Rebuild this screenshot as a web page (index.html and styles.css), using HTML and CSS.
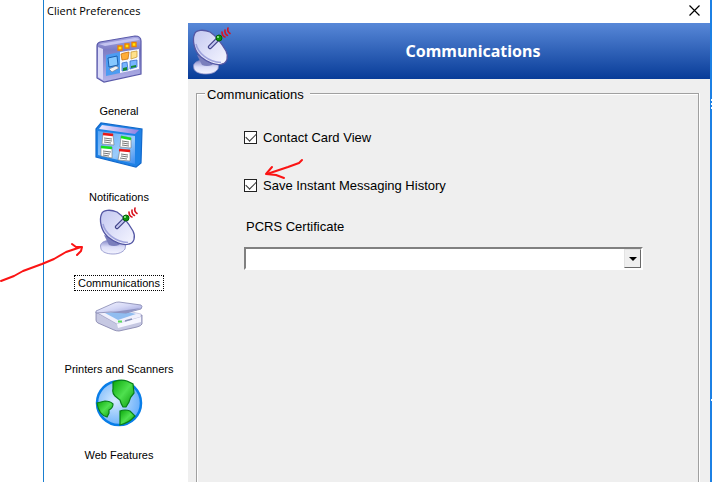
FILE: index.html
```html
<!DOCTYPE html>
<html lang="en">
<head>
  <meta charset="UTF-8">
  <meta name="viewport" content="width=device-width, initial-scale=1.0">
  <title>Client Preferences</title>
  <link rel="stylesheet" href="styles.css">
</head>
<body>
  <!-- shared gradients and the dish symbol -->
  <svg class="defs" width="0" height="0" aria-hidden="true">
    <defs>
      <linearGradient id="lilac" x1="0" y1="0" x2="1" y2="1">
        <stop offset="0" stop-color="#f6f6ff"/>
        <stop offset="0.5" stop-color="#d5d8f6"/>
        <stop offset="1" stop-color="#979bd8"/>
      </linearGradient>
      <linearGradient id="bowl" x1="0" y1="0" x2="1" y2="1">
        <stop offset="0" stop-color="#c3c7f0"/>
        <stop offset="0.6" stop-color="#e2e4fa"/>
        <stop offset="1" stop-color="#f6f6ff"/>
      </linearGradient>
      <linearGradient id="base" x1="0" y1="0" x2="0" y2="1">
        <stop offset="0" stop-color="#8286c6"/>
        <stop offset="0.5" stop-color="#dcdef8"/>
        <stop offset="1" stop-color="#f4f4ff"/>
      </linearGradient>
      <linearGradient id="frame" x1="0" y1="0" x2="0" y2="1">
        <stop offset="0" stop-color="#a9a9e4"/>
        <stop offset="0.3" stop-color="#7c7cc4"/>
        <stop offset="1" stop-color="#b4b4ea"/>
      </linearGradient>
      <linearGradient id="sky" x1="0" y1="0" x2="1" y2="1">
        <stop offset="0" stop-color="#5aa5f5"/>
        <stop offset="0.6" stop-color="#9cccfb"/>
        <stop offset="1" stop-color="#3c8cf0"/>
      </linearGradient>
      <linearGradient id="purple" x1="0" y1="0" x2="1" y2="0">
        <stop offset="0" stop-color="#eeeaff"/>
        <stop offset="1" stop-color="#8f7fe0"/>
      </linearGradient>
      <linearGradient id="land" x1="0" y1="0" x2="1" y2="1">
        <stop offset="0" stop-color="#0aa80a"/>
        <stop offset="0.5" stop-color="#4fe04f"/>
        <stop offset="1" stop-color="#089a08"/>
      </linearGradient>
      <radialGradient id="sea" cx="0.4" cy="0.45" r="0.6">
        <stop offset="0" stop-color="#d4eaff"/>
        <stop offset="1" stop-color="#69affa"/>
      </radialGradient>
      <symbol id="dish" viewBox="0 0 48 48">
        <path d="M5.500 39 C5.500 35 11 33 18 33 C25 33 30.500 35 30.500 39 L30 42 C28 45 24 47 18 47 C12 47 7 45 6 42Z" fill="url(#base)" stroke="#8a8ec8" stroke-width="0.800"/>
        <path d="M9 28 L14 38 Q19 40 24 38 L27 34Z" fill="#7a7ebc"/>
        <path d="M6.500 7 C8 3 15 2 22 5 C28 9 34 17 38 24 C41 30 39 36 34 37 C28 39 19 35 13 30 C6 24 4 13 6.500 7Z" fill="url(#bowl)" stroke="#5457a4" stroke-width="1.300"/>
        <path d="M8 17 C10 26 20 35 33 35.500" fill="none" stroke="#9ea2dc" stroke-width="1.500"/>
        <path d="M22 20 L30 12" stroke="#3f4288" stroke-width="4.500" stroke-linecap="round"/>
        <path d="M22 20 L29 13" stroke="#c4c7f0" stroke-width="2" stroke-linecap="round"/>
        <circle cx="31" cy="11" r="3" fill="#0c920c" stroke="#056005"/>
        <circle cx="30" cy="10" r="1" fill="#9df59d"/>
        <path d="M34 5 Q34 9 37 10 M37 3 Q36.500 7 39.500 8.500 M40 1 Q39 4.500 42 6.500" fill="none" stroke="#d81420" stroke-width="1.600" stroke-linecap="round"/>
      </symbol>
    </defs>
  </svg>

  <div class="window">
    <header class="titlebar">
      <span class="titlebar-text">Client Preferences</span>
      <button class="close" type="button" aria-label="Close">
        <svg width="11" height="11" viewBox="0 0 11 11"><path d="M0.500 0.500 L10.500 10.500 M10.500 0.500 L0.500 10.500" stroke="#000" stroke-width="1.200"/></svg>
      </button>
    </header>

    <div class="content">
      <nav class="sidebar">
        <button class="nav-item" type="button">
          <svg class="icon" viewBox="0 0 48 48">
            <path d="M2 11 Q2 8 5 7 L40 1 Q46 1 46 6 L46 39 L9 47 L2 43Z" fill="url(#frame)" stroke="#5a5aaa" stroke-width="1.200"/>
            <path d="M3 12 L8 14 L8 45 L3 42Z" fill="#dadaf8"/>
            <path d="M4 9 L40 3 Q44 3 44 5 L10 11Z" fill="#c4c4f0"/>
            <path d="M11 20 L25 17 L25 38 L11 41Z" fill="#4c9cf2"/>
            <path d="M25 17 L44 14 L44 34 L25 38Z" fill="#f5f8ff"/>
            <path d="M13 23 L22 21 L23 30 L14 32Z" fill="#86c8ff" stroke="#195fae"/>
            <path d="M14 34 L21 31 L24 33 L17 37Z" fill="#f4f4f4" stroke="#667" stroke-width="0.500"/>
            <path d="M23 11h4v4h-4z M30 9h4v4h-4z M37 7.500h4v4h-4z" fill="#ffe808" stroke="#ef8200" stroke-width="1.300"/>
            <path d="M26 19 L29 18 L34 17 L33 24 L27 25Z" fill="#ffad38" stroke="#cc7410" stroke-width="0.800"/>
            <path d="M36 17 L42 16 L42 22 L36 24Z" fill="#ffe18a" stroke="#ce9d38" stroke-width="0.800"/>
            <path d="M27 28 L32 27 L33 35 L27 36Z M35 26 L42 25 L42 32 L35 34Z" fill="#78b5ff" stroke="#3b70c8" stroke-width="0.800"/>
            <path d="M28 33 L32 32 L32 35 L28 36Z M36 31 L41 30 L41 32 L36 33Z" fill="#158b31"/>
          </svg>
          <span class="nav-label">General</span>
        </button>
        <button class="nav-item" type="button">
          <svg class="icon" viewBox="0 0 48 48">
            <path d="M1 8 L6 2 L47 8 L46 42 L41 46 L1 36Z" fill="#1e82e6" stroke="#1269cc" stroke-width="1.200"/>
            <path d="M3 10 L40 15 L40 43 L3 34Z" fill="url(#sky)"/>
            <path d="M4 8 L7 4 L44 9 L40 13Z" fill="url(#purple)"/>
            <path d="M8 12 L18 13 L19 24 L7 23Z M26 15 L36 17 L36 27 L25 26Z M6 25 L17 26 L17 37 L6 35Z M25 28 L35 29 L35 40 L23 39Z" fill="#fff" stroke="#777" stroke-width="0.600"/>
            <path d="M8 13 L18 14 M24 29 L35 30" stroke="#e81818" stroke-width="2.500"/>
            <path d="M26 16 L36 18 M6 26 L17 27" stroke="#14e020" stroke-width="2.500"/>
            <path d="M9 17l8 1 M9 19l8 1 M9 21l7 1 M27 20l7 1 M27 22l7 1 M27 24l7 1 M8 30l8 1 M8 32l7 1 M8 34l6 1 M26 33l7 1 M26 35l7 1 M25 37l7 1" stroke="#555" stroke-width="0.800"/>
          </svg>
          <span class="nav-label">Notifications</span>
        </button>
        <button class="nav-item" type="button" aria-current="page">
          <svg class="icon"><use href="#dish"/></svg>
          <span class="nav-label selected">Communications</span>
        </button>
        <button class="nav-item" type="button">
          <svg class="icon" viewBox="0 0 48 48">
            <path d="M1 19 L21 30 L47 22 L47 31 Q46 33 42 34 L24 38 Q21 38 19 37 L3 30 Q1 29 1 27Z" fill="#c6c8e2" stroke="#7d7ea8" stroke-width="0.800"/>
            <path d="M1 19 L28 17 L46 21 L46 24 L22 31Z" fill="#f0f0fc" stroke="#a2a3ca" stroke-width="0.500"/>
            <path d="M10 20 L29 18 L41 21 L23 27Z" fill="#91bdf0"/>
            <path d="M22 31 L46 24 L46 29 L23 35Z" fill="#f6f6ff"/>
            <path d="M1 18 L19 10 Q21 9 24 9 L46 12 Q48 13 46 16 L31 20 L16 19 L1 20Z" fill="url(#lilac)" stroke="#8486b0" stroke-width="0.800"/>
            <path d="M18 19 L46 15 L31 20Z" fill="#9094c2"/>
            <path d="M23 28.500h4" stroke="#58dc58" stroke-width="2"/>
            <path d="M30 28 L37 26" stroke="#8690b8" stroke-width="1.500"/>
          </svg>
          <span class="nav-label">Printers and Scanners</span>
        </button>
        <button class="nav-item" type="button">
          <svg class="icon" viewBox="0 0 48 48">
            <circle cx="24" cy="24" r="22" fill="url(#sea)" stroke="#087de8" stroke-width="2.500"/>
            <path d="M18 3 Q25 0 32 2 L38 5 L39 14 Q35 18 34 23 L31 28 L28 28 Q26 25 25 21 L20 17 Q17 14 18 10Z" fill="url(#land)" stroke="#087f18" stroke-width="1.200"/>
            <path d="M2 24 L10 22 Q15 22 18 25 Q18 29 14 31 L14 34 L12 38 Q4 36 2 24Z" fill="url(#land)" stroke="#087f18" stroke-width="1.200"/>
            <path d="M25 32 Q30 30 35 32 L40 37 Q34 44 25 46 L25 40Z" fill="url(#land)" stroke="#087f18" stroke-width="1.200"/>
          </svg>
          <span class="nav-label">Web Features</span>
        </button>
      </nav>

      <main class="page">
        <div class="banner">
          <svg class="icon"><use href="#dish"/></svg>
          <h1>Communications</h1>
        </div>

        <fieldset class="group">
          <legend>Communications</legend>
          <label class="check"><input type="checkbox" checked> Contact Card View</label>
          <label class="check"><input type="checkbox" checked> Save Instant Messaging History</label>
          <label class="field-label" for="certificate">PCRS Certificate</label>
          <div class="combo">
            <select id="certificate"><option></option></select>
            <span class="combo-button"></span>
          </div>
        </fieldset>
      </main>
    </div>
  </div>

  <div class="desktop-marks"></div>

  <!-- pen marks over the window -->
  <svg class="pen" width="320" height="300" viewBox="0 0 320 300" aria-hidden="true">
    <path d="M1 281 L14 276 L23 271 L42 264 L54 259 L66 252 L81 247"/>
    <path d="M72 244 L76 247 L82 247 L81 251 L77 255"/>
    <path d="M302 160 L299 163 L288 167 L267 174"/>
    <path d="M272 167 L266 174 L276 175 L284 178"/>
  </svg>
</body>
</html>
```
FILE: styles.css
```css
* {
  box-sizing: border-box;
}
body {
  margin: 0;
  height: 100vh;
  overflow: hidden;
  background: #fff;
  color: #000;
  font-family: "Liberation Sans", Arial, sans-serif;
  font-size: 13px;
}
button {
  border: none;
  background: none;
  padding: 0;
  font: inherit;
  color: inherit;
}
.defs {
  position: absolute;
}
.window {
  height: 100vh;
  margin-left: 43px;
  border-left: 1px solid #1a7fd0;
  border-right: 2px solid #1c80e4;
  display: flex;
  flex-direction: column;
}
.titlebar {
  flex: none;
  height: 23px;
  padding: 0 10px 3px 3px;
  display: flex;
  align-items: center;
  justify-content: space-between;
  font-family: "Open Sans", "Noto Sans", sans-serif;
  font-size: 11px;
}
.close {
  display: flex;
}
.content {
  flex: 1;
  min-height: 0;
  display: flex;
}

/* left icon list */
.sidebar {
  flex: none;
  width: 144px;
  padding: 12px 0 0 6px;
  display: flex;
  flex-direction: column;
}
.nav-item {
  flex: none;
  height: 86px;
  display: flex;
  flex-direction: column;
  align-items: center;
  gap: 21px;
  font-size: 11px;
  line-height: 12px;
}
.icon {
  flex: none;
  width: 48px;
  height: 48px;
}
.nav-label {
  padding: 1px 3px;
  white-space: nowrap;
}
.selected {
  outline: 1px dotted #000;
}

/* right page */
.page {
  flex: 1;
  min-width: 0;
  background: #efefef;
  overflow: hidden;
}
.banner {
  height: 56px;
  display: flex;
  align-items: center;
  background: linear-gradient(#5888d8, #083c98);
}
.banner h1 {
  flex: 1;
  margin: 0;
  text-align: center;
  color: #fff;
  font-family: "Noto Sans", "Open Sans", sans-serif;
  font-size: 16px;
  font-weight: bold;
}
.group {
  height: 100vh;
  margin: 4px 11px 0 8px;
  padding: 26px 55px 0 47px;
  border: 1px solid #a0a0a0;
  box-shadow: inset 1px 1px #fff, 1px 0 #fff;
}
.group legend {
  margin-left: -39px;
  padding: 4px 6px 0 2px;
  background: #efefef;
  line-height: 16px;
}
.check {
  display: flex;
  align-items: center;
  gap: 6px;
  height: 16px;
  margin-bottom: 32px;
}
.check input {
  appearance: none;
  width: 13px;
  height: 13px;
  margin: 0;
  border: 1px solid #222;
  background: #fff;
  display: grid;
  place-items: center;
}
.check input:checked::before {
  content: "";
  width: 9px;
  height: 5px;
  border: solid #333;
  border-width: 0 0 1px 1px;
  transform: translateY(-1px) rotate(-45deg);
}
.field-label {
  display: block;
  margin: -6px 0 0 2px;
  line-height: 16px;
}
.combo {
  display: flex;
  height: 23px;
  margin-top: 12px;
  border: 2px solid;
  border-color: #808080 #fff #fff #808080;
  background: #fff;
}
.combo select {
  appearance: none;
  flex: 1;
  min-width: 0;
  border: none;
  background: #fff;
  font: inherit;
}
.combo-button {
  width: 17px;
  display: grid;
  place-items: center;
  background: #efefef;
  border: 1px solid;
  border-color: #e3e3e3 #696969 #696969 #e3e3e3;
  pointer-events: none;
}
.combo-button::before {
  content: "";
  border: 4px solid transparent;
  border-top-color: #000;
  border-bottom: none;
}

/* overlays */
.pen {
  position: absolute;
  top: 0;
  left: 0;
  fill: none;
  stroke: #fb1414;
  stroke-width: 2;
  stroke-linecap: round;
  stroke-linejoin: round;
  pointer-events: none;
}
.desktop-marks {
  position: absolute;
  top: 99px;
  right: 0;
  width: 1px;
  height: 302px;
  background:
    linear-gradient(#fff, #fff) 0 0 / 1px 2px no-repeat,
    linear-gradient(#fff, #fff) 0 4px / 1px 2px no-repeat,
    linear-gradient(#fff, #fff) 0 8px / 1px 2px no-repeat,
    linear-gradient(#fff, #fff) 0 100% / 1px 2px no-repeat;
}
```
